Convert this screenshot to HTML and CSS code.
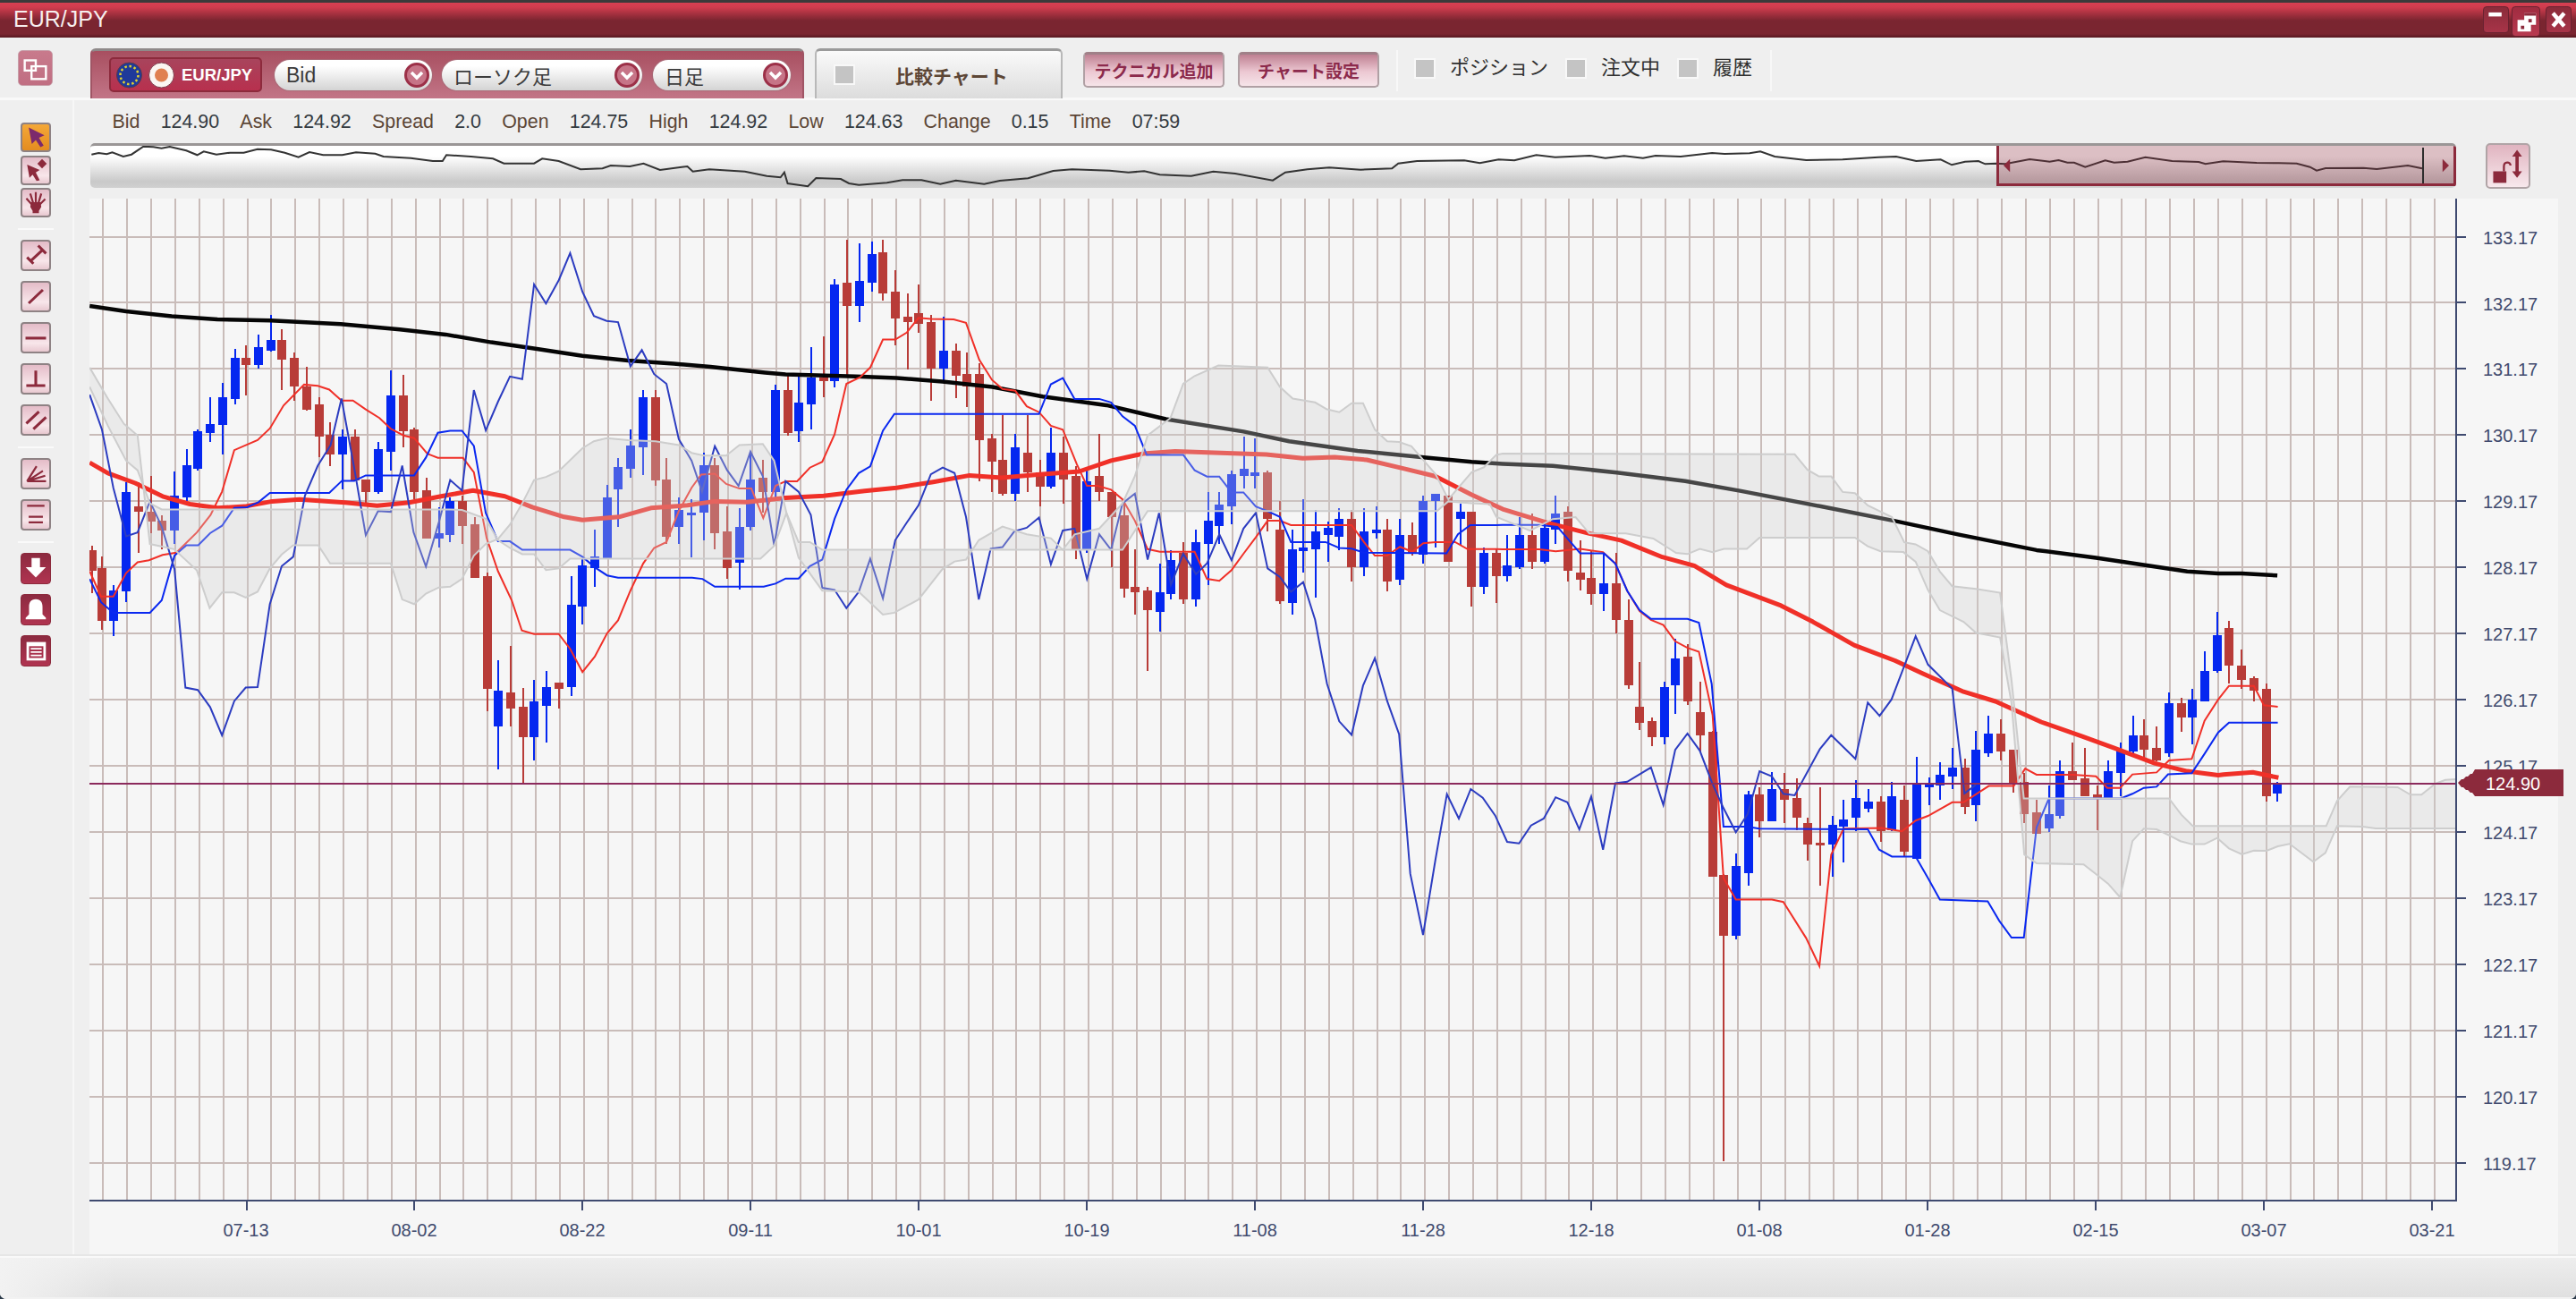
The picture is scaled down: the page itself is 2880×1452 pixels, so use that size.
FILE: index.html
```html
<!DOCTYPE html>
<html lang="ja">
<head>
<meta charset="utf-8">
<title>EUR/JPY</title>
<link rel="stylesheet" href="styles.css">
</head>
<body>
<div class="window">
  <header class="titlebar">
    <span class="title">EUR/JPY</span>
    <div class="win-buttons">
      <button class="win-btn"><svg viewBox="0 0 30 30" class="ico"><rect x="6" y="6" width="16" height="5" class="white"/></svg></button>
      <button class="win-btn win-btn-on"><svg viewBox="0 0 32 34" class="ico"><path class="white" d="M14 7h14v14h-6v8H6V15h8z"/><path class="maroon" d="M14 7h14v3H14zM19 14h4v4h-4zM10 22h4v4h-4z"/></svg></button>
      <button class="win-btn"><svg viewBox="0 0 30 30" class="ico"><path d="M8 7l14 16M22 7L8 23" class="stroke-white"/></svg></button>
    </div>
  </header>

  <div class="top-row">
    <div class="corner">
      <button class="layout-btn"><svg viewBox="0 0 39 40" class="ico"><rect x="7" y="11" width="13" height="12" class="outline-white"/><rect x="15" y="18" width="17" height="15" class="outline-white"/></svg></button>
    </div>
    <div class="toolbar">
      <div class="symbol-panel">
        <div class="symbol">
          <svg class="flags" viewBox="0 0 65 30">
            <circle cx="14.500" cy="15" r="14" class="flag-eu"/>
            <circle cx="14.500" cy="15" r="10" class="flag-stars"/>
            <circle cx="50.500" cy="15" r="14" class="flag-jp"/>
            <circle cx="50.500" cy="15" r="7.500" class="flag-sun"/>
          </svg>
          <span>EUR/JPY</span>
        </div>
        <div class="select select-bid"><span>Bid</span><svg class="caret" viewBox="0 0 30 30"><circle cx="15" cy="15" r="12.500"/><path d="M9 12l6 6 6-6"/></svg></div>
        <div class="select select-type"><span>ローソク足</span><svg class="caret" viewBox="0 0 30 30"><circle cx="15" cy="15" r="12.500"/><path d="M9 12l6 6 6-6"/></svg></div>
        <div class="select select-period"><span>日足</span><svg class="caret" viewBox="0 0 30 30"><circle cx="15" cy="15" r="12.500"/><path d="M9 12l6 6 6-6"/></svg></div>
      </div>
      <div class="compare-tab"><i class="check"></i><span>比較チャート</span></div>
      <button class="action action-first">テクニカル追加</button>
      <button class="action">チャート設定</button>
      <div class="checks">
        <i class="check"></i><span>ポジション</span>
        <i class="check"></i><span>注文中</span>
        <i class="check"></i><span>履歴</span>
      </div>
    </div>
  </div>

  <div class="mid-row">
    <aside class="tools">
      <div class="tool-group tool-group-tight">
        <button class="tool tool-small tool-active"><svg viewBox="0 0 34 33" class="ico"><path class="purple" d="M8 4l20 10-7 3 6 10-4 2-6-9-5 5z"/></svg></button>
        <button class="tool tool-small"><svg viewBox="0 0 34 33" class="ico"><path class="maroon" d="M6 9l16 7-5 3 5 10-4 1-5-8-4 4z"/><path class="maroon" d="M25 2l6 6-6 6-6-6zM24 6h2v4h-2z"/></svg></button>
        <button class="tool tool-small"><svg viewBox="0 0 34 33" class="ico"><path class="stroke-maroon-2" d="M13 20L5 11M14 18L10 5M17 18V3M20 18l4-13M21 20l8-8"/><path class="maroon" d="M11 16h12l1 6-3 5v3h-8v-3l-3-5z"/></svg></button>
      </div>
      <hr class="tool-sep">
      <div class="tool-group">
        <button class="tool"><svg viewBox="0 0 34 35" class="ico"><path class="stroke-maroon-3" d="M10 25L25 11M6 20l8 8M20 5l10 10"/></svg></button>
        <button class="tool"><svg viewBox="0 0 34 35" class="ico"><path class="stroke-maroon-3" d="M8 26L26 9"/></svg></button>
        <button class="tool"><svg viewBox="0 0 34 35" class="ico"><path class="stroke-maroon-3" d="M4 18h26"/></svg></button>
        <button class="tool"><svg viewBox="0 0 34 35" class="ico"><path class="stroke-maroon-3" d="M17 7v19M5 26h24"/></svg></button>
        <button class="tool"><svg viewBox="0 0 34 35" class="ico"><path class="stroke-maroon-3" d="M5 22L21 7M14 29L30 14"/></svg></button>
      </div>
      <hr class="tool-sep">
      <div class="tool-group">
        <button class="tool"><svg viewBox="0 0 34 35" class="ico"><path class="stroke-maroon-2" d="M6 27h24M6 27L18 8M6 27l20-13M6 27l23-7"/></svg></button>
        <button class="tool"><svg viewBox="0 0 34 35" class="ico"><path class="stroke-maroon-2" d="M6 6h22M8 20h18M8 27h18"/></svg></button>
      </div>
      <hr class="tool-sep">
      <div class="tool-group">
        <button class="tool tool-solid"><svg viewBox="0 0 34 35" class="ico"><path class="white" d="M12 5h10v11h7L17 28 5 16h7z"/></svg></button>
        <button class="tool tool-solid"><svg viewBox="0 0 34 35" class="ico"><path class="white" d="M17 5c6 0 8 4 8 9v9l4 4v2H5v-2l4-4v-9c0-5 2-9 8-9z"/></svg></button>
        <button class="tool tool-solid"><svg viewBox="0 0 34 35" class="ico"><path class="white" d="M6 7h23v22H6z"/><path class="list-fill" d="M9 12h17v14H9z"/><path class="stroke-white-2" d="M11 15h13M11 19h13M11 23h13"/></svg></button>
      </div>
    </aside>

    <main class="content">
      <div class="quote">
        <span class="k">Bid</span><span class="v">124.90</span>
        <span class="k">Ask</span><span class="v">124.92</span>
        <span class="k">Spread</span><span class="v">2.0</span>
        <span class="k">Open</span><span class="v">124.75</span>
        <span class="k">High</span><span class="v">124.92</span>
        <span class="k">Low</span><span class="v">124.63</span>
        <span class="k">Change</span><span class="v">0.15</span>
        <span class="k">Time</span><span class="v">07:59</span>
      </div>

      <div class="nav-row">
        <div class="navigator">
          <svg class="nav-svg" viewBox="101 160 2645 50" width="2645" height="50"><polyline id="navline" class="nav-line"/></svg>
          <div class="nav-sel">
            <i class="nav-mark"></i>
            <svg class="nav-handle nav-handle-l" viewBox="0 0 10 16"><path d="M0 8l8-8v16z"/></svg>
            <svg class="nav-handle nav-handle-r" viewBox="0 0 10 16"><path d="M2 0l8 8-8 8z"/></svg>
          </div>
        </div>
        <button class="lock-btn"><svg viewBox="0 0 50 51" class="ico"><path class="maroon" d="M36 6l6 8h-4v18h4l-6 8-6-8h4V14h-4z"/><rect x="7" y="32" width="16" height="14" class="maroon"/><path class="stroke-maroon-2" d="M20 32v-6c0-6 8-6 8-1"/></svg></button>
      </div>

      <div class="chart">
        <svg class="chart-svg" viewBox="100 222 2760 1180" width="2760" height="1180">
          <defs><clipPath id="plot"><rect x="100" y="222" width="2646" height="1120"/></clipPath></defs>
          <g id="series" clip-path="url(#plot)"></g>
          <line x1="100" y1="876" x2="2746" y2="876" class="price-line"/>
          <path class="axis" d="M100 1342H2747M2746 222V1342"/>
          <path id="ticks" class="axis"/>
          <g class="axis-labels">
            <text x="2776" y="272.500">133.17</text>
            <text x="2776" y="346.500">132.17</text>
            <text x="2776" y="420.400">131.17</text>
            <text x="2776" y="494.400">130.17</text>
            <text x="2776" y="568.400">129.17</text>
            <text x="2776" y="642.400">128.17</text>
            <text x="2776" y="716.300">127.17</text>
            <text x="2776" y="790.300">126.17</text>
            <text x="2776" y="864.300">125.17</text>
            <text x="2776" y="938.200">124.17</text>
            <text x="2776" y="1012.200">123.17</text>
            <text x="2776" y="1086.200">122.17</text>
            <text x="2776" y="1160.100">121.17</text>
            <text x="2776" y="1234.100">120.17</text>
            <text x="2776" y="1308.100">119.17</text>
          </g>
          <g class="axis-labels axis-labels-x">
            <text x="275" y="1381.500">07-13</text>
            <text x="463" y="1381.500">08-02</text>
            <text x="651" y="1381.500">08-22</text>
            <text x="839" y="1381.500">09-11</text>
            <text x="1027" y="1381.500">10-01</text>
            <text x="1215" y="1381.500">10-19</text>
            <text x="1403" y="1381.500">11-08</text>
            <text x="1591" y="1381.500">11-28</text>
            <text x="1779" y="1381.500">12-18</text>
            <text x="1967" y="1381.500">01-08</text>
            <text x="2155" y="1381.500">01-28</text>
            <text x="2343" y="1381.500">02-15</text>
            <text x="2531" y="1381.500">03-07</text>
            <text x="2719" y="1381.500">03-21</text>
          </g>
          <path class="price-tag" d="M2748 875l4-4h2l3-3h2l3-3h2l3-5h99v30h-99l-3-4h-2l-3-3h-2l-3-3h-2z"/>
          <text class="price-tag-text" x="2779" y="882.500">124.90</text>
        </svg>
      </div>
    </main>
  </div>

  <footer class="statusbar"></footer>
</div>
<script src="chart.js"></script>
</body>
</html>
```

FILE: styles.css
```css
* { box-sizing: border-box; }
html, body { margin: 0; padding: 0; background: #2b3a4a; }
body { width: 2880px; height: 1452px; overflow: hidden; font-family: "Liberation Sans", "Noto Sans CJK JP", sans-serif; }
button { padding: 0; margin: 0; font: inherit; cursor: default; }
.ico { display: block; width: 100%; height: 100%; }
.white { fill: #fff; }
.maroon { fill: #8c2a3c; }
.purple { fill: #7c2a6c; }
.list-fill { fill: #a8304c; }
.stroke-white { stroke: #fff; stroke-width: 5; fill: none; }
.stroke-white-2 { stroke: #fff; stroke-width: 2; fill: none; }
.stroke-maroon-3 { stroke: #8c2a3c; stroke-width: 3.500; fill: none; }
.stroke-maroon-2 { stroke: #8c2a3c; stroke-width: 2.500; fill: none; }
.outline-white { fill: none; stroke: #fff; stroke-width: 2.500; }

.window { width: 2880px; height: 1452px; display: flex; flex-direction: column; background: #efefef; border-radius: 0 0 7px 7px; overflow: hidden; }

.titlebar { height: 42px; flex: none; display: flex; align-items: center; justify-content: space-between; padding: 3px 5px 0 15px; color: #f6eeee; background: linear-gradient(#3a3a3a 0 3px, #d64052 3px, #d03c4e 8px, #7a2530 23px, #7a2530 38px, #561820 42px); }
.title { font-size: 25px; margin-top: -2px; }
.win-buttons { display: flex; gap: 3px; align-items: flex-start; margin-top: 1px; align-self: flex-start; padding-top: 3px; }
.win-btn { width: 29px; height: 30px; border: 1px solid #6a2230; border-radius: 4px; background: linear-gradient(#8a2c3a, #a83448); }
.win-btn-on { width: 32px; height: 34px; background: linear-gradient(#a02c40, #b83a50); margin-right: 3px; }

.top-row { height: 70px; flex: none; display: flex; border-bottom: 3px solid #f9f9f9; }
.corner { width: 83px; flex: none; padding: 14px 0 0 20px; }
.layout-btn { display: block; width: 39px; height: 40px; border: 1px solid #c8a0aa; border-radius: 5px; background: linear-gradient(#c87a8c, #c06e82); }
.toolbar { flex: 1; display: flex; align-items: flex-start; padding: 12px 0 0 18px; }

.symbol-panel { width: 798px; height: 56px; display: flex; align-items: flex-start; padding: 7px 0 0 19px; border-top: 3px solid #8f8a8a; border-left: 2px solid #a05565; border-right: 2px solid #a05565; border-radius: 6px 6px 0 0; background: linear-gradient(#a84f60, #c27587); }
.symbol { width: 171px; height: 39px; display: flex; align-items: center; gap: 8px; padding-left: 6px; border: 2px solid #8c2a3c; border-radius: 5px; background: linear-gradient(#a8445c, #b8304e); color: #fff; font-weight: bold; font-size: 18.500px; }
.flags { width: 65px; height: 30px; flex: none; }
.flag-eu { fill: #1f3a9a; stroke: #5a3a4a; stroke-width: 1; }
.flag-stars { fill: none; stroke: #e0d030; stroke-width: 2.500; stroke-dasharray: 2.500 2.700; }
.flag-jp { fill: #fbf6f2; stroke: #7a3a4a; stroke-width: 1; }
.flag-sun { fill: #e08050; }

.select { height: 34px; margin-top: 3px; display: flex; align-items: center; justify-content: space-between; padding: 0 2px 0 13px; border-radius: 17px; background: linear-gradient(#fff 20%, #d4d4d4); box-shadow: 0 0 0 1px #a86b78; font-size: 22px; color: #3c3c3c; }
.select-bid { width: 176px; margin-left: 14px; font-size: 23px; }
.select-type { width: 224px; margin-left: 11px; }
.select-period { width: 154px; margin-left: 12px; }
.caret { width: 30px; height: 30px; flex: none; }
.caret circle { fill: #c67487; stroke: #9c3048; stroke-width: 3; }
.caret path { fill: none; stroke: #fff; stroke-width: 3.500; }

.compare-tab { width: 277px; height: 56px; margin-left: 12px; display: flex; align-items: center; gap: 45px; padding: 0 0 0 19px; border-top: 3px solid #9a9a9a; border-left: 2px solid #b8b8b8; border-right: 2px solid #b8b8b8; border-radius: 6px 6px 0 0; background: linear-gradient(#fafafa, #dcdcdc); font-weight: bold; font-size: 21px; color: #5c4636; }
.check { display: block; width: 24px; height: 23px; flex: none; background: #c4c4c4; border: 2px solid #f8f8f8; }

.action { width: 158px; height: 40px; margin: 4px 0 0 15px; border: 2px solid #b0a0a4; border-top: 3px solid #a08088; border-radius: 5px; background: linear-gradient(#bf8092, #ecc8d2 55%, #f6e4e9); color: #8c2a4c; font-weight: bold; font-size: 19px; white-space: nowrap; }
.action-first { margin-left: 23px; }

.checks { height: 46px; margin: 2px 0 0 19px; width: 420px; padding: 9px 0 0 18px; display: flex; align-items: flex-start; border-left: 2px solid #f8f8f8; border-right: 2px solid #f8f8f8; font-size: 22px; color: #2f2f2f; }
.checks span { margin: 0 19px 0 16px; line-height: 21px; }

.mid-row { flex: 1; min-height: 0; display: flex; }
.tools { width: 83px; flex: none; padding: 25px 0 0 23px; border-right: 2px solid #f7f7f7; }
.tool-group { display: flex; flex-direction: column; gap: 11px; }
.tool-group-tight { gap: 3.500px; }
.tool { display: block; width: 34px; height: 35px; border: 2px solid #8e8284; border-radius: 4px; background: linear-gradient(#e4bcc8, #f8e6ea 70%, #e8c8d0); }
.tool-small { height: 33px; }
.tool-active { background: linear-gradient(#f4a838, #e48c20); }
.tool-solid { border: 1px solid #8c2a3c; background: linear-gradient(#8c2a40, #b03450); }
.tool-sep { width: 40px; height: 2px; margin: 12px 0 11px -3px; border: 0; background: #fafafa; }

.content { flex: 1; min-width: 0; padding-left: 17px; display: flex; flex-direction: column; }
.quote { height: 48px; flex: none; display: flex; align-items: center; gap: 23.250px; padding: 0 0 0 25.500px; font-size: 21.400px; color: #333a40; }
.quote .k { color: #5c4636; }

.nav-row { height: 50px; flex: none; display: flex; margin-left: 1px; gap: 33px; }
.navigator { position: relative; width: 2645px; height: 50px; border-radius: 5px; overflow: hidden; border-top: 3px solid #9a9696; background: linear-gradient(#fff 25%, #c9c9c9 85%, #d0d0d0); }
.nav-svg { position: absolute; left: 0; top: -3px; }
.nav-line { fill: none; stroke: #333; stroke-width: 2; }
.nav-sel { position: absolute; left: 2131px; top: -3px; width: 514px; height: 48px; border: 3px solid #8c2a3c; background: rgba(140, 42, 60, 0.3); }
.nav-mark { position: absolute; left: 473px; top: 2px; bottom: 0; width: 2px; background: #2e2e2e; }
.nav-handle { position: absolute; top: 14px; width: 9px; height: 16px; fill: #8c2a3c; }
.nav-handle-l { left: 5px; }
.nav-handle-r { right: 5px; }
.lock-btn { width: 50px; height: 51px; flex: none; border: 2px solid #b0a4a6; border-radius: 5px; background: linear-gradient(#e0b4c0, #f8e8ec); }

.chart { flex: 1; min-height: 0; margin-top: 12px; width: 2760px; background: #f6f6f6; }
.chart-svg { display: block; overflow: visible; }
.grid { stroke: #c9bcb9; stroke-width: 2; shape-rendering: crispEdges; }
.wick { stroke-width: 2; shape-rendering: crispEdges; }
.up { fill: #0527f0; stroke: #0527f0; }
.down { fill: #b83c38; stroke: #b83c38; }
.body { stroke: none; shape-rendering: crispEdges; }
.sma-long { fill: none; stroke: #050505; stroke-width: 4.500; stroke-linejoin: round; }
.sma-mid { fill: none; stroke: #f03028; stroke-width: 5; stroke-linejoin: round; }
.tenkan { fill: none; stroke: #f03028; stroke-width: 2; }
.kijun { fill: none; stroke: #0a28f0; stroke-width: 2; }
.chikou { fill: none; stroke: #2c3cc0; stroke-width: 2; }
.cloud-fill { fill: #cfcfcf; fill-opacity: 0.32; stroke: none; }
.cloud-edge { fill: none; stroke: #cdcdcd; stroke-width: 2; }
.price-line { stroke: #8c2a5c; stroke-width: 2; }
.axis { fill: none; stroke: #3f4a70; stroke-width: 2; shape-rendering: crispEdges; }
.axis-labels { font-size: 20px; fill: #414b6e; }
.axis-labels-x { text-anchor: middle; }
.price-tag { fill: #8c2a3c; }
.price-tag-text { font-size: 20px; fill: #fff; }

.statusbar { height: 50px; flex: none; border-top: 2px solid #e6e6e6; box-shadow: inset 0 1px 0 #f9f9f9, inset 0 2px 0 #f9f9f9; border-bottom: 2px solid #f2f2f2; background: linear-gradient(90deg, #f2f2f2 0, rgba(242, 242, 242, 0) 130px), linear-gradient(#eeeeee, #e0e0e0); }
```

FILE: chart.js
```javascript
// Chart geometry and data. Values were read per chart region, each with its own x/y mapping.
const NS = 'http://www.w3.org/2000/svg';
const map = {
  a: (x, y) => [90 + x / 1.96, 220 + y / 2.306],
  b: (x, y) => [880 + x / 1.96, 220 + y / 2.306],
  c: (x, y) => [1680 + x / 1.96, 500 + y / 2.306],
  d: (x, y) => [2240 + x / 2.44, 660 + y / 3],
  e: (x, y) => [1540 + x / 3, 780 + y / 3],
  n1: (x, y) => [x / 1.633, y / 3],
  n2: (x, y) => [960 + x / 1.4255, y / 3],
  n3: (x, y) => [2100 + x / 2.01, y / 3]
};

function series(parts) {
  const out = [];
  parts.forEach(([key, text]) => {
    text.trim().split(/\s+/).forEach(tok => {
      const [x, y] = tok.split(',').map(Number);
      const p = map[key](x, y);
      if (!out.length || p[0] > out[out.length - 1][0]) out.push(p);
    });
  });
  return out;
}
const pts = s => s.map(p => p[0].toFixed(1) + ',' + p[1].toFixed(1)).join(' ');

const root = document.getElementById('series');
function add(tag, attrs, parent) {
  const el = document.createElementNS(NS, tag);
  Object.keys(attrs).forEach(k => el.setAttribute(k, attrs[k]));
  (parent || root).appendChild(el);
  return el;
}

// grid
for (let k = 0; k < 98; k++) {
  const x = Math.round(115.4 + 26.87 * k);
  add('line', { x1: x, x2: x, y1: 222, y2: 1342, class: 'grid' });
}
for (let k = 0; k < 15; k++) {
  const y = Math.round(264.5 + 73.97 * k);
  add('line', { x1: 100, x2: 2746, y1: y, y2: y, class: 'grid' });
}

// ticks on the axes
let ticks = '';
for (let k = 0; k < 15; k++) ticks += 'M2746 ' + Math.round(264.5 + 73.97 * k) + 'h11';
for (let k = 0; k < 14; k++) ticks += 'M' + Math.round(275.5 + 187.95 * k) + ' 1342v11';
document.getElementById('ticks').setAttribute('d', ticks);

// candles: colour,x,wickTop,bodyTop,bodyBottom,wickBottom
const candles = {
  a: `r,25,900,910,963,1022 r,48,928,958,1092,1115 b,72,1000,1015,1092,1133 b,100,735,760,1018,1045 r,127,735,797,811,917 r,154,720,811,838,868 r,178,822,835,861,908 b,206,707,770,861,895 b,233,650,692,775,785 b,257,600,604,700,705 b,284,517,586,608,632 b,312,480,517,589,663 b,339,392,415,521,535 r,362,382,415,433,512 b,390,355,387,433,443 b,417,305,369,396,400 r,441,342,369,419,498 r,468,401,415,489,525 r,496,438,489,549,552 r,524,517,535,617,672 r,547,582,614,664,695 b,574,600,618,664,755 r,602,600,618,732,732 r,625,728,728,760,790 b,652,632,650,761,765 b,680,447,512,658,706 r,708,458,512,604,645 r,731,596,600,760,780 r,759,724,756,880,880 b,786,800,866,880,903 b,810,775,784,871,890 r,837,770,784,848,895 r,865,825,844,982,982 r,892,968,978,1268,1327 b,915,1195,1273,1364,1475 r,943,1158,1277,1318,1365 r,970,1265,1314,1392,1515 b,994,1245,1301,1392,1452 b,1021,1222,1264,1313,1406 r,1048,1252,1253,1268,1318 b,1076,978,1051,1264,1286 b,1100,935,950,1055,1102 b,1127,858,928,958,1005 b,1154,742,775,932,932 b,1178,673,696,755,852 b,1205,600,641,700,723 b,1233,498,517,645,718 r,1260,498,517,732,745 r,1284,673,728,876,895 b,1311,775,807,852,895 b,1339,780,813,816,930 b,1366,660,692,815,885 r,1390,673,692,866,908 r,1417,798,862,958,985 b,1444,803,850,944,1013 b,1468,658,729,852,860 r,1496,678,725,760,815 b,1523,485,498,760,775 r,1551,460,498,608,615`,
  b: `b,26,460,530,604,632 b,53,387,465,535,600 r,80,360,465,475,517 b,104,212,226,474,492 r,131,110,221,281,465 b,159,120,217,281,323 b,186,115,148,221,245 r,210,110,143,249,267 r,237,190,244,314,383 r,265,250,309,323,446 r,288,226,300,327,350 r,315,305,323,443,525 b,343,310,397,443,475 r,370,378,397,461,520 r,394,401,457,488,543 r,421,430,457,627,733 r,449,610,623,683,762 r,472,562,678,766,770 b,500,610,646,766,783 r,527,562,659,710,760 r,555,678,710,747,797 b,578,596,659,747,752 r,606,618,659,729,790 r,633,695,720,908,935 b,657,705,733,908,917 r,684,610,720,761,785 r,712,760,761,825,955 r,739,780,821,1010,1032 r,763,908,1005,1019,1078 r,790,1005,1015,1065,1222 b,817,945,1019,1070,1120 b,841,910,936,1023,1037 r,868,890,917,1037,1050 b,896,858,890,1037,1055 b,923,762,835,894,1000 b,947,762,793,849,895 b,974,705,715,798,843 b,1002,618,701,720,752 b,1025,622,710,719,752 r,1053,705,710,830,862 r,1080,785,858,1042,1050 b,1108,858,909,1046,1078 b,1131,780,904,913,968 b,1159,808,862,908,1033 b,1186,836,853,871,940 b,1210,802,830,876,912 r,1237,808,830,955,992 b,1264,802,862,955,977 b,1292,798,858,867,880 r,1315,830,858,992,1018 b,1343,830,871,987,1000 r,1370,840,871,917,925 b,1394,770,784,922,945 b,1421,766,766,784,905 r,1449,770,770,940,940 b,1476,790,812,830,898 r,1500,812,812,1005,1055 b,1527,905,917,1005,1023 r,1554,908,917,977,1046`,
  c: `b,10,226,305,332,346 b,37,180,226,309,313 r,65,170,226,295,313 b,92,190,208,295,300 b,116,125,171,213,248 r,143,152,166,318,346 r,170,240,323,341,368 r,194,268,337,378,405 b,221,273,350,378,423 r,249,272,350,446,480 r,276,392,446,613,622 r,300,553,669,710,728 r,327,696,705,747,770 b,355,604,618,747,765 b,378,493,544,613,687 r,406,508,540,655,663 r,433,604,683,742,785 r,460,730,733,1106,1106 r,484,1100,1102,1258,1840 b,511,1047,1079,1258,1268 b,539,885,895,1098,1130 r,562,877,895,964,1005 b,590,836,881,964,964 r,617,840,881,908,968 r,645,853,904,955,987 r,668,955,968,1023,1065 r,696,876,1019,1023,1130 b,723,950,973,1023,1106 b,747,908,959,978,1070 b,774,858,904,955,990 b,802,881,913,932,940 r,829,900,913,990,1018 b,853,862,899,987,990 r,880,872,909,1042,1055 b,908,798,867,1060,1060 b,935,850,867,876,922 b,959,812,845,871,908 b,986,775,826,849,880 r,1014,802,826,926,945 b,1037,730,780,922,964 b,1064,692,738,789,798 r,1092,702,738,784,807 r,1119,780,780,867,890 r,1143,840,862,945,968 r,1170,908,941,996,996 b,1197,872,945,982,992 b,1221,808,835,950,957 r,1248,761,835,858,858 r,1276,775,853,899,900 r,1303,872,895,905,987 b,1327,808,835,905,905 b,1354,761,780,839,900 b,1382,692,742,784,790 r,1405,702,742,780,807 r,1433,720,775,807,810 b,1460,632,659,789,798 r,1488,646,659,696,733 b,1511,623,650,696,765 b,1538,526,576,655,655 b,1566,424,484,576,580`,
  d: `r,615,102,126,252,312 r,649,198,252,300,330 r,683,288,294,336,372 r,718,312,330,690,708 b,747,642,650,680,708`
};
Object.keys(candles).forEach(key => {
  candles[key].split(/\s+/).forEach(tok => {
    const f = tok.split(',');
    const x = Math.round(map[key](+f[1], 0)[0]);
    const cls = f[0] === 'r' ? 'down' : 'up';
    const y = v => map[key](0, +v)[1];
    add('line', { x1: x, x2: x, y1: y(f[2]), y2: y(f[5]), class: 'wick ' + cls });
    add('rect', { x: x - 5, width: 10, y: y(f[3]), height: Math.max(3, y(f[4]) - y(f[3])), class: 'body ' + cls });
  });
});

// moving averages and Ichimoku lines
const smaLong = series([
  ['a', '20,281 100,295 200,308 300,316 417,319 570,328 700,342 800,355 900,375 1000,392 1100,410 1200,422 1300,430 1380,438 1500,453 1545,458'],
  ['b', '150,463 240,467 340,476 450,490 560,515 700,537 830,573 1000,605 1100,630 1250,655 1400,672 1500,683 1568,688'],
  ['c', '110,48 250,65 400,87 520,112 700,153 860,190 1000,225 1170,265 1300,285 1500,320 1568,325'],
  ['d', '650,-57 747,-50']
]);
const smaMid = series([
  ['a', '20,685 60,712 120,738 180,772 240,792 300,802 360,798 420,785 480,780 580,788 650,796 720,788 790,772 860,757 930,772 990,800 1060,825 1100,833 1180,825 1250,802 1330,795 1390,785 1460,787 1545,776'],
  ['b', '80,771 170,758 240,750 320,735 400,718 470,724 560,715 640,708 710,680 780,662 850,656 950,660 1050,664 1130,674 1200,671 1270,678 1350,700 1420,720 1500,768 1568,805'],
  ['c', '100,195 190,222 260,240 350,283 420,305 490,355 610,408 680,450 770,510 860,550 920,583 1010,630 1080,655 1180,708 1270,745 1340,775 1430,815 1500,835 1568,845'],
  ['d', '600,617 680,610 750,628']
]);
const tenkan = series([
  ['a', '20,965 45,1030 72,1030 100,970 125,942 150,937 180,923 210,917 255,865 285,820 310,760 337,653 388,627 415,597 445,538 490,484 520,487 545,497 572,525 597,525 625,548 655,570 680,598 708,615 731,622 760,662 783,673 838,673 862,710 890,880 915,965 945,1040 967,1118 994,1127 1048,1127 1073,1165 1100,1225 1127,1185 1154,1125 1178,1092 1205,1015 1233,945 1257,905 1284,890 1311,810 1339,750 1360,716 1390,714 1415,740 1444,752 1470,752 1496,828 1523,745 1545,733'],
  ['b', '22,733 50,698 77,683 104,612 130,482 160,465 182,440 210,368 237,368 262,350 288,312 315,315 365,316 392,325 421,420 449,472 472,495 500,500 525,540 552,555 578,590 604,600 635,690 657,745 680,745 710,755 735,780 762,835 790,908 817,915 893,915 920,985 947,990 974,962 1000,920 1027,878 1053,835 1080,835 1104,846 1237,846 1264,890 1288,925 1315,925 1343,902 1370,915 1394,893 1421,890 1464,890 1491,908 1554,908'],
  ['c', '0,263 80,263 116,268 170,262 220,270 247,300 273,370 300,422 325,445 352,458 378,500 405,517 430,527 460,690 484,1110 511,1166 590,1166 615,1172 665,1265 694,1337 720,1050 747,983 830,981 875,990 905,962 932,950 985,915 1010,915 1065,873 1120,873 1145,828 1170,844 1250,844 1300,848 1325,878 1353,878 1380,843 1433,838 1460,807 1510,803 1538,705 1568,650'],
  ['d', '615,320 683,320 710,385 748,390']
]);
const kijun = series([
  ['a', '20,985 45,1045 72,1072 152,1072 178,1040 206,925 232,898 258,898 284,867 310,848 337,802 365,800 390,787 415,763 545,763 573,732 600,732 625,718 731,718 757,672 783,608 810,603 836,603 862,642 888,815 915,888 941,888 968,910 1073,910 1100,928 1127,955 1154,976 1178,982 1340,982 1363,985 1390,1005 1497,1005 1523,997 1545,984'],
  ['b', '25,984 50,952 77,935 104,830 130,755 157,712 182,695 210,603 235,560 552,560 578,483 604,467 630,521 684,521 710,530 735,566 762,590 788,665 868,665 893,705 920,721 947,721 974,762 1000,762 1027,798 1053,810 1080,825 1104,890 1180,890 1210,905 1237,907 1264,917 1445,919 1470,870 1497,846 1554,846'],
  ['c', '0,200 80,200 120,205 170,273 222,273 247,300 273,370 300,420 325,442 405,442 430,452 458,610 484,978 536,978 562,983 800,985 825,1037 853,1055 905,1055 932,1110 958,1166 1063,1170 1088,1220 1115,1264 1142,1264 1170,980 1197,905 1355,905 1380,893 1405,878 1433,875 1458,843 1510,840 1538,790 1568,735'],
  ['d', '615,443 748,443']
]);
const chikou = series([
  ['a', '20,510 47,600 72,750 100,875 125,865 152,785 178,850 206,960 230,1265 257,1271 284,1315 310,1388 337,1300 362,1265 388,1264 415,1050 441,952 466,928 492,770 520,693 548,640 572,520 600,700 625,872 652,810 680,812 705,693 730,865 757,953 785,840 810,730 836,757 862,498 888,602 915,528 941,463 968,470 994,226 1020,275 1048,215 1073,145 1100,245 1125,307 1153,320 1178,323 1205,437 1230,395 1257,457 1284,482 1311,625 1339,680 1362,760 1390,643 1417,705 1442,745 1468,657 1495,720 1520,898 1545,733'],
  ['b', '25,760 52,820 77,1008 104,1013 130,1060 157,1018 182,933 210,1035 237,885 262,840 288,795 315,715 341,698 367,712 392,825 420,1038 446,907 472,903 498,862 525,853 552,827 578,947 604,860 630,855 657,985 684,870 710,910 735,790 762,765 790,935 815,815 841,1000 868,920 896,973 920,945 947,870 974,937 1000,855 1027,815 1053,958 1080,980 1104,1018 1131,993 1157,1090 1183,1255 1210,1352 1237,1387 1262,1260 1288,1189 1315,1300 1341,1385'],
  ['e', '110,590 153,795 195,540 233,323 273,405 313,306 353,335 395,395 435,483 475,488 515,428'],
  ['c', '90,957 116,902 142,915 168,985 194,900 220,1037 247,866 273,862 325,825 352,922 378,780 405,738 432,782 458,862 484,930 511,992 537,945 563,835 590,848 615,893 640,897 695,778 720,742 773,803 800,658 826,692 852,650 905,487 932,560 985,622 1012,892 1037,870']
]);
[[smaLong, 'sma-long'], [smaMid, 'sma-mid'], [tenkan, 'tenkan'], [kijun, 'kijun'], [chikou, 'chikou']].forEach(([s, c]) => {
  add('polyline', { points: pts(s), class: c });
});

// cloud
const spanA = series([
  ['a', '20,440 60,520 95,585 125,615 152,895 205,908 255,963 283,1060 310,1020 337,1020 362,1033 388,1018 415,958 441,922 466,898 521,898 547,945 680,945 705,1038 731,1050 757,1023 785,1007 810,1005 836,985 862,925 888,895 915,882 941,845 968,790 994,730 1020,722 1048,707 1100,648 1125,630 1153,622 1200,627 1260,630 1311,640 1339,660 1366,667 1415,667 1444,640 1495,637 1520,680 1547,815'],
  ['b', '25,930 77,1015 157,1018 210,1077 235,1072 288,1038 340,960 367,940 392,935 420,885 472,850 525,870 578,880 604,910 630,870 684,855 735,790 762,720 790,615 840,570 868,482 893,462 945,435 1053,440 1080,490 1108,520 1157,530 1183,548 1210,555 1237,532 1262,532 1288,600 1315,630 1341,632 1368,643 1421,715 1449,780 1500,710 1527,697 1554,665 1568,662'],
  ['c', '640,18 668,58 693,75 720,75 745,115 772,118 800,150 853,180 880,245 905,250 932,268 958,320 985,358 1037,365 1090,375 1115,600 1142,905 1460,905'],
  ['d', '485,752 516,790 880,790 910,705 945,658 1075,660 1110,685 1140,685 1178,648 1205,635 1240,633']
]);
const spanB = series([
  ['a', '20,490 60,590 100,680 125,705 152,790 178,806 810,806 836,807 888,830 915,885 941,905 968,921 994,921 1020,962 1048,958 1073,933 1490,933 1520,900 1547,815'],
  ['b', '25,890 50,890 77,910 735,910 790,810 1424,810 1449,785 1500,790 1540,792 1554,825'],
  ['c', '60,215 110,185 160,180 190,222 270,222 330,235 380,272 405,275 432,262 460,270 485,262 535,262 563,233 772,233 800,255 828,268 878,270 905,295 932,368 958,420 1010,450 1037,478 1090,490 1115,660 1143,1050 1170,1072 1273,1075 1300,1100 1327,1125 1353,1160 1380,1015 1405,983 1433,985 1460,1000 1485,1015 1510,1023 1538,1023'],
  ['d', '583,830 615,865 650,885 683,872 717,873 748,858 780,850 845,910 878,880 910,790 980,792 1015,798 1240,798']
]);
add('polygon', { points: pts(spanA) + ' ' + pts(spanB.slice().reverse()), class: 'cloud-fill' });
add('polyline', { points: pts(spanA), class: 'cloud-edge' });
add('polyline', { points: pts(spanB), class: 'cloud-edge' });

// navigator overview line
const nav = series([
  ['n1', '167,518 180,513 195,517 205,511 225,525 240,518 262,491 280,493 295,497 310,492 340,505 360,520 372,508 395,518 420,512 445,512 470,500 495,502 520,512 545,527 565,510 590,520 625,520 650,511 685,515 700,525 750,530 790,540 808,540 815,520 860,525 900,532 920,548 975,548 990,532 1020,540 1060,568 1100,565 1115,555 1150,558 1175,548 1205,570 1255,558 1265,575 1295,568 1360,575 1400,590 1425,595 1432,578 1438,615 1475,625 1490,597 1535,600 1550,615 1568,620'],
  ['n2', '45,613 70,604 100,604 130,617 155,605 200,617 225,606 270,598 310,573 340,568 400,572 430,578 455,574 480,586 530,590 565,575 600,582 660,605 680,578 715,568 750,562 800,569 850,565 860,548 890,540 965,538 990,547 1020,535 1045,538 1080,520 1110,527 1165,522 1190,530 1220,523 1250,530 1270,522 1310,525 1360,513 1380,516 1420,514 1437,508 1460,525 1510,537 1568,535'],
  ['n3', '0,527 40,525 85,540 140,535 165,553 195,542 225,540 240,550 265,548 285,550 340,534 385,542 405,537 425,545 440,545 465,560 510,538 530,545 560,542 600,527 660,540 720,543 735,550 775,541 850,546 900,547 940,548 970,560 985,572 1005,564 1090,563 1120,567 1190,555 1222,565']
]);
document.getElementById('navline').setAttribute('points', pts(nav));
```
